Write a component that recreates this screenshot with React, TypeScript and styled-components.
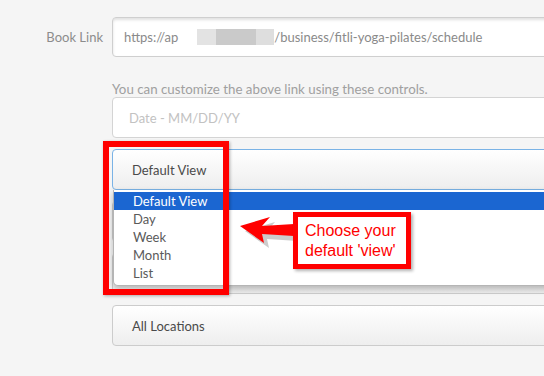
import styled, { createGlobalStyle } from "styled-components"

const GlobalStyle = createGlobalStyle`
  html, body {
    margin: 0;
    padding: 0;
    background: #f5f5f5;
    overflow: hidden;
  }
  body {
    font-family: Lato, "Liberation Sans", sans-serif;
  }
`

const viewOptions = ["Default View", "Day", "Week", "Month", "List"]

export default function App() {
    return (
        <>
            <GlobalStyle />
            <Page>
                <FieldRow>
                    <Label>Book Link</Label>
                    <LinkBox>
                        <span>https://ap</span>
                        <Redacted>
                            <i /><i /><i />
                        </Redacted>
                        <span>/business/fitli-yoga-pilates/schedule</span>
                    </LinkBox>
                </FieldRow>

                <FieldRow $top={24}>
                    <span />
                    <Controls>
                        <Help>You can customize the above link using these controls.</Help>
                        <Input $placeholder>Date - MM/DD/YY</Input>
                        <SelectWrap>
                            <Select $focused>Default View</Select>
                            {/* native select popup */}
                            <Menu>
                                {viewOptions.map((o, i) => (
                                    <MenuItem key={o} $active={i === 0}>{o}</MenuItem>
                                ))}
                            </Menu>
                        </SelectWrap>
                        {/* these two sit under the open menu */}
                        <Select />
                        <Select />
                        <Select>All Locations</Select>
                    </Controls>
                </FieldRow>

                {/* screenshot annotation */}
                <Highlight />
                <Arrow width="60" height="34" viewBox="0 0 60 34">
                    <polygon points="4,13 34,4 26,13 58,11 58,23 26,21 28,30" fill="#999" opacity="0.5" transform="translate(3,3)" />
                    <polygon points="2,11 32,2 24,11 56,9 56,21 24,19 26,28" fill="#ff0000" />
                </Arrow>
                <Callout>
                    Choose your<br />
                    default 'view'
                </Callout>
            </Page>
        </>
    )
}

const Page = styled.div`
    position: relative;
    width: 544px;
    height: 376px;
    padding-top: 17px;
    box-sizing: border-box;
    overflow: hidden;
`

const FieldRow = styled.div<{ $top?: number }>`
    display: grid;
    grid-template-columns: 103px 600px;
    column-gap: 9px;
    align-items: center;
    margin-top: ${p => p.$top || 0}px;
`

const Label = styled.div`
    text-align: right;
    font-size: 13px;
    color: #8c8c8c;
`

const LinkBox = styled.div`
    height: 40px;
    box-sizing: border-box;
    border: 1px solid #cfcfcf;
    border-radius: 4px;
    background: #fff;
    box-shadow: inset 0 2px 3px rgba(0, 0, 0, 0.12);
    display: flex;
    align-items: center;
    padding-left: 11px;
    font-size: 13px;
    color: #8a8a8a;
    white-space: nowrap;
`

const Redacted = styled.span`
    display: flex;
    margin-left: 19px;
    height: 16px;
    i {
        display: block;
        width: 19px;
        background: #e3e3e3;
    }
    i:nth-child(2) {
        width: 40px;
        background: #cacaca;
    }
    i:nth-child(3) {
        width: 18px;
        background: #dedede;
    }
`

const Controls = styled.div`
    display: flex;
    flex-direction: column;
    gap: 11px;
`

const Help = styled.div`
    font-size: 13.3px;
    color: #a0a0a0;
    margin-bottom: -11px;
    line-height: 16px;
`

const Input = styled.div<{ $placeholder?: boolean }>`
    height: 41px;
    box-sizing: border-box;
    border: 1px solid #d4d4d4;
    border-radius: 4px;
    background: #fff;
    display: flex;
    align-items: center;
    padding-left: 16px;
    font-size: 13px;
    color: ${p => (p.$placeholder ? "#c2c2c2" : "#444")};
`

const SelectWrap = styled.div`
    position: relative;
`

const Select = styled.div<{ $focused?: boolean }>`
    height: 41px;
    box-sizing: border-box;
    border: 1px solid ${p => (p.$focused ? "#7ab3e6" : "#cccccc")};
    border-radius: 4px;
    background: linear-gradient(#ffffff, #eeeeee);
    display: flex;
    align-items: center;
    padding-left: 19px;
    font-size: 13px;
    color: #4a4a4a;
`

const Menu = styled.div`
    position: absolute;
    left: 1px;
    right: 0;
    top: 41px;
    z-index: 5;
    background: #fff;
    border: 1px solid #b5b5b5;
    border-top: none;
    border-radius: 0 0 5px 5px;
    padding: 2px 0 3px;
    box-shadow: 0 3px 6px rgba(0, 0, 0, 0.25);
`

const MenuItem = styled.div<{ $active?: boolean }>`
    height: 18px;
    line-height: 18px;
    padding-left: 19px;
    font-size: 13px;
    color: ${p => (p.$active ? "#fff" : "#5a5a5a")};
    background: ${p => (p.$active ? "#1b66d1" : "transparent")};
`

const Highlight = styled.div`
    position: absolute;
    left: 103px;
    top: 141px;
    width: 126px;
    height: 154px;
    box-sizing: border-box;
    border: 6px solid #ff0000;
    z-index: 10;
    box-shadow: 1px 1px 3px rgba(0, 0, 0, 0.3);
`

const Arrow = styled.svg`
    position: absolute;
    left: 238px;
    top: 215px;
    z-index: 10;
`

const Callout = styled.div`
    position: absolute;
    left: 293px;
    top: 212px;
    width: 118px;
    height: 57px;
    box-sizing: border-box;
    border: 5px solid #ff0000;
    background: #fff;
    padding: 4px 0 0 7px;
    font-family: "Liberation Sans", Arial, sans-serif;
    font-size: 16px;
    line-height: 20px;
    white-space: nowrap;
    color: #ff0000;
    z-index: 11;
    box-shadow: 2px 2px 3px rgba(0, 0, 0, 0.3);
`
